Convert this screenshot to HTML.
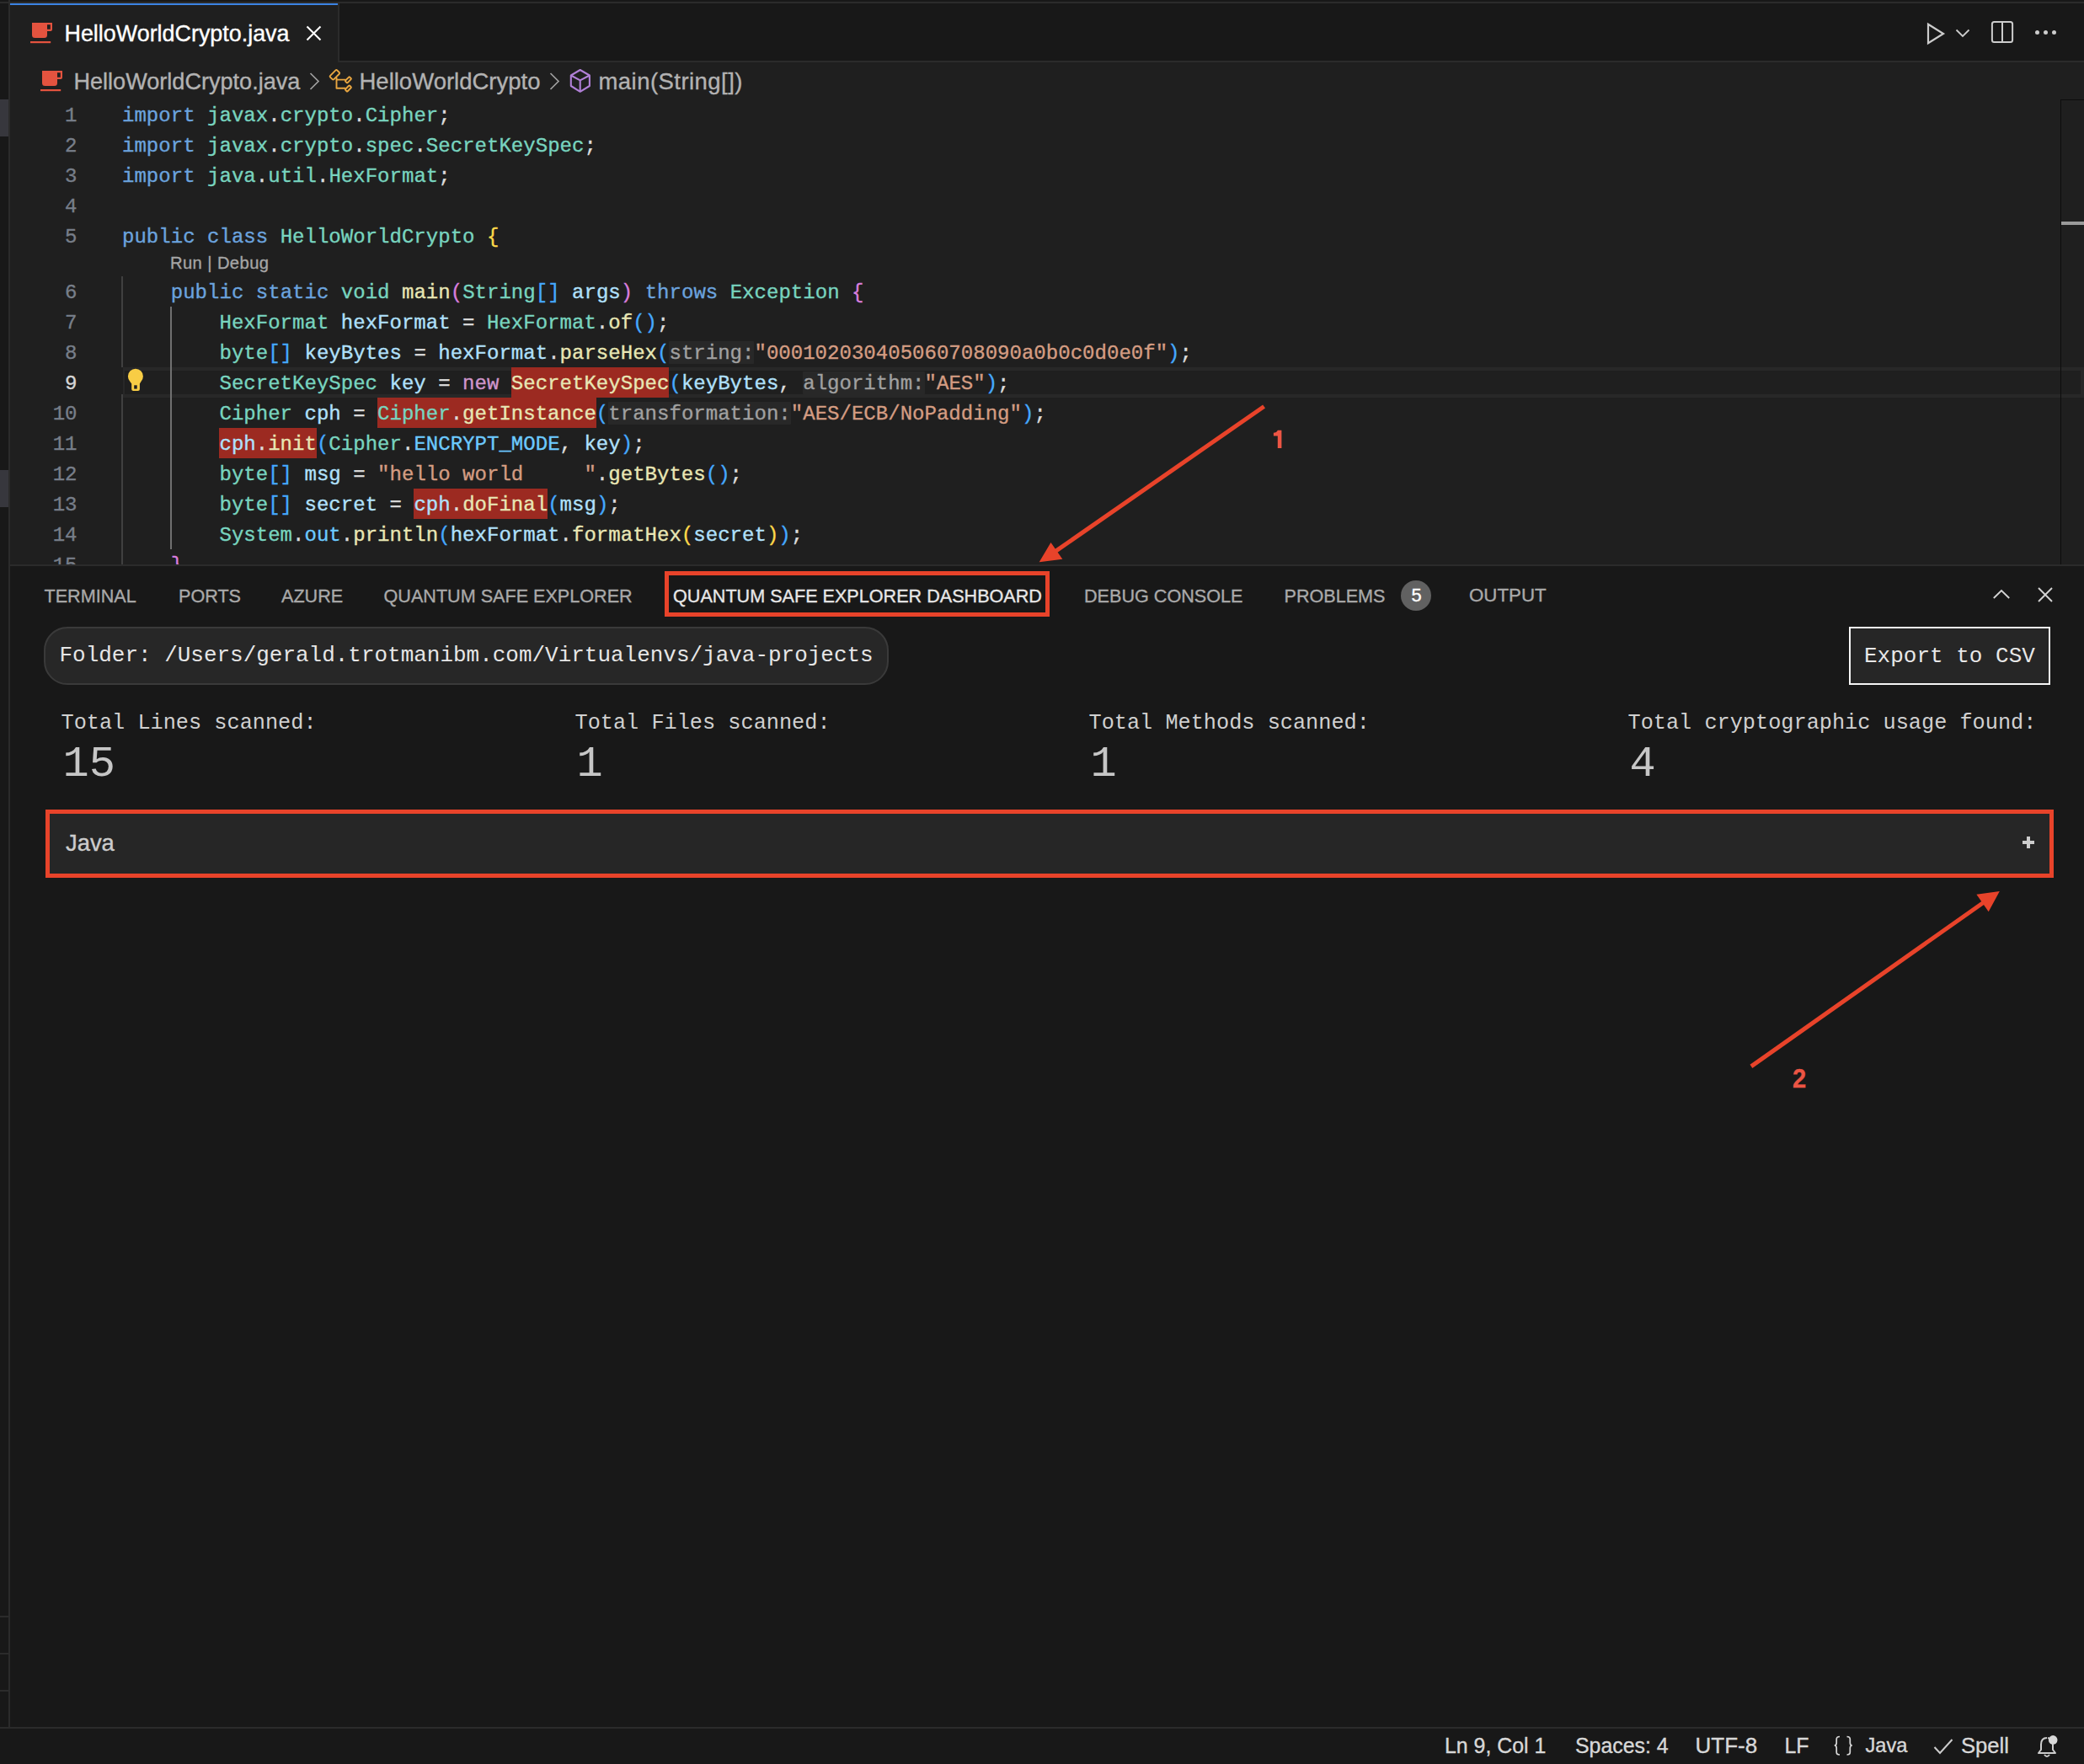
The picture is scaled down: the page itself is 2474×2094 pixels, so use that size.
<!DOCTYPE html>
<html><head><meta charset="utf-8"><title>VS Code</title>
<style>html,body{margin:0;padding:0;width:2474px;height:2094px;overflow:hidden;background:#1f1f1f} div{-webkit-text-stroke:0.35px currentColor} span{-webkit-text-stroke:0.35px currentColor}</style></head>
<body><div style="position:relative;width:2474px;height:2094px;overflow:hidden">
<div style="position:absolute;left:0px;top:0px;width:2474px;height:2094px;background:#1f1f1f;"></div>
<div style="position:absolute;left:0px;top:0px;width:10px;height:2050px;background:#181818;"></div>
<div style="position:absolute;left:10px;top:0px;width:2px;height:2050px;background:#2b2b2b;"></div>
<div style="position:absolute;left:0px;top:118px;width:10px;height:44px;background:#37373d;"></div>
<div style="position:absolute;left:0px;top:558px;width:10px;height:44px;background:#37373d;"></div>
<div style="position:absolute;left:0px;top:1918px;width:10px;height:2px;background:#2b2b2b;"></div>
<div style="position:absolute;left:0px;top:1962px;width:10px;height:2px;background:#2b2b2b;"></div>
<div style="position:absolute;left:0px;top:2006px;width:10px;height:2px;background:#2b2b2b;"></div>
<div style="position:absolute;left:12px;top:0px;width:2462px;height:72px;background:#181818;"></div>
<div style="position:absolute;left:0px;top:2px;width:2474px;height:2px;background:#2b2b2b;"></div>
<div style="position:absolute;left:12px;top:72px;width:2462px;height:2px;background:#2b2b2b;"></div>
<div style="position:absolute;left:12px;top:4px;width:389px;height:70px;background:#1f1f1f;"></div>
<div style="position:absolute;left:12px;top:4px;width:389px;height:2px;background:#3b83e3;"></div>
<div style="position:absolute;left:401px;top:4px;width:2px;height:70px;background:#2b2b2b;"></div>
<svg style="position:absolute;left:36px;top:27px" width="26.0" height="25.0" viewBox="0 0 26 25">
<path d="M2 0 H26 V8 Q26 10 24 10 H20 V14.5 Q20 18 16.5 18 H5.5 Q2 18 2 14.5 Z M20 2.2 V7.8 H23.8 V2.2 Z" fill="#e4533f" fill-rule="evenodd"/>
<rect x="0" y="22" width="24.2" height="2.2" fill="#e4533f"/></svg>
<div style="position:absolute;left:76.5px;top:27.42px;font:normal 26.9px/26.9px 'Liberation Sans', sans-serif;color:#ffffff;white-space:pre;">HelloWorldCrypto.java</div>
<svg style="position:absolute;left:363px;top:29.5px" width="19" height="19" viewBox="0 0 19 19"><path d="M1.5 1.5 L17.5 17.5 M17.5 1.5 L1.5 17.5" stroke="#ffffff" stroke-width="2.1"/></svg>
<svg style="position:absolute;left:2286px;top:25px" width="26" height="30" viewBox="0 0 26 30"><path d="M3 3.8 L21 15 L3 26.2 Z" fill="none" stroke="#cccccc" stroke-width="2.2" stroke-linejoin="miter"/></svg>
<svg style="position:absolute;left:2321px;top:34px" width="18" height="11" viewBox="0 0 18 11"><path d="M1.5 1.5 L9 9 L16.5 1.5" fill="none" stroke="#cccccc" stroke-width="1.8"/></svg>
<svg style="position:absolute;left:2363px;top:24px" width="28" height="28" viewBox="0 0 28 28"><rect x="1.9" y="1.9" width="24.2" height="24.2" rx="2.5" fill="none" stroke="#cccccc" stroke-width="2"/><path d="M14 2 V26" stroke="#cccccc" stroke-width="2"/></svg>
<div style="position:absolute;left:2415.5px;top:36px;width:5px;height:5px;border-radius:50%;background:#cccccc"></div>
<div style="position:absolute;left:2425.5px;top:36px;width:5px;height:5px;border-radius:50%;background:#cccccc"></div>
<div style="position:absolute;left:2435.5px;top:36px;width:5px;height:5px;border-radius:50%;background:#cccccc"></div>
<svg style="position:absolute;left:48px;top:84px" width="26.0" height="25.0" viewBox="0 0 26 25">
<path d="M2 0 H26 V8 Q26 10 24 10 H20 V14.5 Q20 18 16.5 18 H5.5 Q2 18 2 14.5 Z M20 2.2 V7.8 H23.8 V2.2 Z" fill="#e4533f" fill-rule="evenodd"/>
<rect x="0" y="22" width="24.2" height="2.2" fill="#e4533f"/></svg>
<div style="position:absolute;left:87.4px;top:83.45px;font:normal 27.1px/27.1px 'Liberation Sans', sans-serif;color:#b2b2b2;white-space:pre;">HelloWorldCrypto.java</div>
<svg style="position:absolute;left:367px;top:85.5px" width="13" height="21" viewBox="0 0 13 21"><path d="M1.5 1 L11 10.5 L1.5 20" fill="none" stroke="#a0a0a0" stroke-width="1.7"/></svg>
<svg style="position:absolute;left:385px;top:76px" width="40" height="40" viewBox="0 0 40 40">
<g fill="none" stroke="#e9a640" stroke-width="1.9" stroke-linejoin="round">
<rect x="-5.75" y="-3.05" width="11.5" height="6.1" rx="1.2" transform="translate(12.4,12.8) rotate(-45)"/>
<path d="M14.5 16 V28.8 H25 M14.5 18.6 H25"/>
<rect x="-3.6" y="-1.8" width="7.2" height="3.6" rx="0.8" transform="translate(28.4,18.8) rotate(-45)"/>
<rect x="-3.6" y="-1.8" width="7.2" height="3.6" rx="0.8" transform="translate(28.4,29) rotate(-45)"/>
</g></svg>
<div style="position:absolute;left:426.5px;top:83.12px;font:normal 27.5px/27.5px 'Liberation Sans', sans-serif;color:#b2b2b2;white-space:pre;">HelloWorldCrypto</div>
<svg style="position:absolute;left:651.5px;top:85.5px" width="13" height="21" viewBox="0 0 13 21"><path d="M1.5 1 L11 10.5 L1.5 20" fill="none" stroke="#a0a0a0" stroke-width="1.7"/></svg>
<svg style="position:absolute;left:670px;top:76px" width="40" height="40" viewBox="0 0 40 40">
<g fill="none" stroke="#b180d7" stroke-width="2.1" stroke-linejoin="round">
<path d="M18.7 7 L29.9 13.5 V26 L18.7 32.8 L7.8 26 V13.5 Z"/>
<path d="M7.8 13.5 L18.7 19.4 L29.9 13.5 M18.7 19.4 V32.8"/>
</g></svg>
<div style="position:absolute;left:710.5px;top:83.12px;font:normal 27.5px/27.5px 'Liberation Sans', sans-serif;color:#b2b2b2;white-space:pre;letter-spacing:0.45px;">main(String[])</div>
<div style="position:absolute;left:2446px;top:118px;width:1px;height:552px;background:#0d0d0d;"></div>
<div style="position:absolute;left:2446px;top:118px;width:28px;height:1px;background:#0d0d0d;"></div>
<div style="position:absolute;left:2447px;top:263px;width:27px;height:4px;background:#9a9a9a;"></div>
<div style="position:absolute;left:144px;top:328px;width:2px;height:342px;background:#404040;"></div>
<div style="position:absolute;left:146px;top:436px;width:2328px;height:4px;background:#282828;"></div>
<div style="position:absolute;left:146px;top:468px;width:2328px;height:4px;background:#282828;"></div>
<div style="position:absolute;left:146px;top:436px;width:2px;height:36px;background:#282828;"></div>
<div style="position:absolute;left:2470px;top:436px;width:4px;height:36px;background:#282828;"></div>
<div style="position:absolute;left:2446px;top:436px;width:1px;height:36px;background:#0d0d0d;"></div>
<div style="position:absolute;left:144px;top:436px;width:2px;height:32px;background:#1f1f1f;"></div>
<div style="position:absolute;left:202px;top:364px;width:2px;height:288px;background:#707070;"></div>
<div style="position:absolute;left:606.8240000000001px;top:436px;width:187.616px;height:36px;background:#9c2a21;"></div>
<div style="position:absolute;left:448.072px;top:472px;width:259.776px;height:36px;background:#9c2a21;"></div>
<div style="position:absolute;left:260.456px;top:508px;width:115.456px;height:36px;background:#9c2a21;"></div>
<div style="position:absolute;left:491.368px;top:580px;width:158.752px;height:36px;background:#9c2a21;"></div>
<div style="position:absolute;left:794.44px;top:404.5px;width:101.024px;height:27.5px;background:#282828;border-radius:1px;"></div>
<div style="position:absolute;left:953.192px;top:440.5px;width:144.32px;height:27.5px;background:#282828;border-radius:1px;"></div>
<div style="position:absolute;left:722.28px;top:476.5px;width:216.48000000000002px;height:27.5px;background:#282828;border-radius:1px;"></div>
<div style="position:absolute;left:12px;top:118px;width:2434px;height:552px;overflow:hidden">
<div style="position:absolute;left:65.07px;top:7.61px;font:24.05px/24.05px 'Liberation Mono', monospace;color:#777e89;white-space:pre">1</div>
<div style="position:absolute;left:133px;top:7.61px;font:24.05px/24.05px 'Liberation Mono', monospace;white-space:pre"><span style="color:#6ba3de">import</span><span style="color:#dcdcdc"> </span><span style="color:#78d4bf">javax</span><span style="color:#dcdcdc">.</span><span style="color:#78d4bf">crypto</span><span style="color:#dcdcdc">.</span><span style="color:#78d4bf">Cipher</span><span style="color:#dcdcdc">;</span></div>
<div style="position:absolute;left:65.07px;top:43.61px;font:24.05px/24.05px 'Liberation Mono', monospace;color:#777e89;white-space:pre">2</div>
<div style="position:absolute;left:133px;top:43.61px;font:24.05px/24.05px 'Liberation Mono', monospace;white-space:pre"><span style="color:#6ba3de">import</span><span style="color:#dcdcdc"> </span><span style="color:#78d4bf">javax</span><span style="color:#dcdcdc">.</span><span style="color:#78d4bf">crypto</span><span style="color:#dcdcdc">.</span><span style="color:#78d4bf">spec</span><span style="color:#dcdcdc">.</span><span style="color:#78d4bf">SecretKeySpec</span><span style="color:#dcdcdc">;</span></div>
<div style="position:absolute;left:65.07px;top:79.61px;font:24.05px/24.05px 'Liberation Mono', monospace;color:#777e89;white-space:pre">3</div>
<div style="position:absolute;left:133px;top:79.61px;font:24.05px/24.05px 'Liberation Mono', monospace;white-space:pre"><span style="color:#6ba3de">import</span><span style="color:#dcdcdc"> </span><span style="color:#78d4bf">java</span><span style="color:#dcdcdc">.</span><span style="color:#78d4bf">util</span><span style="color:#dcdcdc">.</span><span style="color:#78d4bf">HexFormat</span><span style="color:#dcdcdc">;</span></div>
<div style="position:absolute;left:65.07px;top:115.61px;font:24.05px/24.05px 'Liberation Mono', monospace;color:#777e89;white-space:pre">4</div>
<div style="position:absolute;left:133px;top:115.61px;font:24.05px/24.05px 'Liberation Mono', monospace;white-space:pre"></div>
<div style="position:absolute;left:65.07px;top:151.61px;font:24.05px/24.05px 'Liberation Mono', monospace;color:#777e89;white-space:pre">5</div>
<div style="position:absolute;left:133px;top:151.61px;font:24.05px/24.05px 'Liberation Mono', monospace;white-space:pre"><span style="color:#6ba3de">public</span><span style="color:#dcdcdc"> </span><span style="color:#6ba3de">class</span><span style="color:#dcdcdc"> </span><span style="color:#78d4bf">HelloWorldCrypto</span><span style="color:#dcdcdc"> </span><span style="color:#fdd84a">{</span></div>
<div style="position:absolute;left:65.07px;top:217.61px;font:24.05px/24.05px 'Liberation Mono', monospace;color:#777e89;white-space:pre">6</div>
<div style="position:absolute;left:133px;top:217.61px;font:24.05px/24.05px 'Liberation Mono', monospace;white-space:pre"><span style="color:#dcdcdc">    </span><span style="color:#6ba3de">public</span><span style="color:#dcdcdc"> </span><span style="color:#6ba3de">static</span><span style="color:#dcdcdc"> </span><span style="color:#78d4bf">void</span><span style="color:#dcdcdc"> </span><span style="color:#e8e6b4">main</span><span style="color:#d87ddd">(</span><span style="color:#78d4bf">String</span><span style="color:#45a9ff">[]</span><span style="color:#dcdcdc"> </span><span style="color:#b0e0fb">args</span><span style="color:#d87ddd">)</span><span style="color:#dcdcdc"> </span><span style="color:#6ba3de">throws</span><span style="color:#dcdcdc"> </span><span style="color:#78d4bf">Exception</span><span style="color:#dcdcdc"> </span><span style="color:#d87ddd">{</span></div>
<div style="position:absolute;left:65.07px;top:253.61px;font:24.05px/24.05px 'Liberation Mono', monospace;color:#777e89;white-space:pre">7</div>
<div style="position:absolute;left:133px;top:253.61px;font:24.05px/24.05px 'Liberation Mono', monospace;white-space:pre"><span style="color:#dcdcdc">        </span><span style="color:#78d4bf">HexFormat</span><span style="color:#dcdcdc"> </span><span style="color:#b0e0fb">hexFormat</span><span style="color:#dcdcdc"> = </span><span style="color:#78d4bf">HexFormat</span><span style="color:#dcdcdc">.</span><span style="color:#e8e6b4">of</span><span style="color:#45a9ff">()</span><span style="color:#dcdcdc">;</span></div>
<div style="position:absolute;left:65.07px;top:289.61px;font:24.05px/24.05px 'Liberation Mono', monospace;color:#777e89;white-space:pre">8</div>
<div style="position:absolute;left:133px;top:289.61px;font:24.05px/24.05px 'Liberation Mono', monospace;white-space:pre"><span style="color:#dcdcdc">        </span><span style="color:#78d4bf">byte</span><span style="color:#45a9ff">[]</span><span style="color:#dcdcdc"> </span><span style="color:#b0e0fb">keyBytes</span><span style="color:#dcdcdc"> = </span><span style="color:#b0e0fb">hexFormat</span><span style="color:#dcdcdc">.</span><span style="color:#e8e6b4">parseHex</span><span style="color:#45a9ff">(</span><span style="color:#a0a0a0">string:</span><span style="color:#d49c82">&quot;000102030405060708090a0b0c0d0e0f&quot;</span><span style="color:#45a9ff">)</span><span style="color:#dcdcdc">;</span></div>
<div style="position:absolute;left:65.07px;top:325.61px;font:24.05px/24.05px 'Liberation Mono', monospace;color:#d6d6d6;white-space:pre">9</div>
<div style="position:absolute;left:133px;top:325.61px;font:24.05px/24.05px 'Liberation Mono', monospace;white-space:pre"><span style="color:#dcdcdc">        </span><span style="color:#78d4bf">SecretKeySpec</span><span style="color:#dcdcdc"> </span><span style="color:#b0e0fb">key</span><span style="color:#dcdcdc"> = </span><span style="color:#d096cb">new</span><span style="color:#dcdcdc"> </span><span style="color:#e8e6b4">SecretKeySpec</span><span style="color:#45a9ff">(</span><span style="color:#b0e0fb">keyBytes</span><span style="color:#dcdcdc">, </span><span style="color:#a0a0a0">algorithm:</span><span style="color:#d49c82">&quot;AES&quot;</span><span style="color:#45a9ff">)</span><span style="color:#dcdcdc">;</span></div>
<div style="position:absolute;left:50.64px;top:361.61px;font:24.05px/24.05px 'Liberation Mono', monospace;color:#777e89;white-space:pre">10</div>
<div style="position:absolute;left:133px;top:361.61px;font:24.05px/24.05px 'Liberation Mono', monospace;white-space:pre"><span style="color:#dcdcdc">        </span><span style="color:#78d4bf">Cipher</span><span style="color:#dcdcdc"> </span><span style="color:#b0e0fb">cph</span><span style="color:#dcdcdc"> = </span><span style="color:#78d4bf">Cipher</span><span style="color:#dcdcdc">.</span><span style="color:#e8e6b4">getInstance</span><span style="color:#45a9ff">(</span><span style="color:#a0a0a0">transformation:</span><span style="color:#d49c82">&quot;AES/ECB/NoPadding&quot;</span><span style="color:#45a9ff">)</span><span style="color:#dcdcdc">;</span></div>
<div style="position:absolute;left:50.64px;top:397.61px;font:24.05px/24.05px 'Liberation Mono', monospace;color:#777e89;white-space:pre">11</div>
<div style="position:absolute;left:133px;top:397.61px;font:24.05px/24.05px 'Liberation Mono', monospace;white-space:pre"><span style="color:#dcdcdc">        </span><span style="color:#b0e0fb">cph</span><span style="color:#dcdcdc">.</span><span style="color:#e8e6b4">init</span><span style="color:#45a9ff">(</span><span style="color:#78d4bf">Cipher</span><span style="color:#dcdcdc">.</span><span style="color:#6ccaff">ENCRYPT_MODE</span><span style="color:#dcdcdc">, </span><span style="color:#b0e0fb">key</span><span style="color:#45a9ff">)</span><span style="color:#dcdcdc">;</span></div>
<div style="position:absolute;left:50.64px;top:433.61px;font:24.05px/24.05px 'Liberation Mono', monospace;color:#777e89;white-space:pre">12</div>
<div style="position:absolute;left:133px;top:433.61px;font:24.05px/24.05px 'Liberation Mono', monospace;white-space:pre"><span style="color:#dcdcdc">        </span><span style="color:#78d4bf">byte</span><span style="color:#45a9ff">[]</span><span style="color:#dcdcdc"> </span><span style="color:#b0e0fb">msg</span><span style="color:#dcdcdc"> = </span><span style="color:#d49c82">&quot;hello world     &quot;</span><span style="color:#dcdcdc">.</span><span style="color:#e8e6b4">getBytes</span><span style="color:#45a9ff">()</span><span style="color:#dcdcdc">;</span></div>
<div style="position:absolute;left:50.64px;top:469.61px;font:24.05px/24.05px 'Liberation Mono', monospace;color:#777e89;white-space:pre">13</div>
<div style="position:absolute;left:133px;top:469.61px;font:24.05px/24.05px 'Liberation Mono', monospace;white-space:pre"><span style="color:#dcdcdc">        </span><span style="color:#78d4bf">byte</span><span style="color:#45a9ff">[]</span><span style="color:#dcdcdc"> </span><span style="color:#b0e0fb">secret</span><span style="color:#dcdcdc"> = </span><span style="color:#b0e0fb">cph</span><span style="color:#dcdcdc">.</span><span style="color:#e8e6b4">doFinal</span><span style="color:#45a9ff">(</span><span style="color:#b0e0fb">msg</span><span style="color:#45a9ff">)</span><span style="color:#dcdcdc">;</span></div>
<div style="position:absolute;left:50.64px;top:505.61px;font:24.05px/24.05px 'Liberation Mono', monospace;color:#777e89;white-space:pre">14</div>
<div style="position:absolute;left:133px;top:505.61px;font:24.05px/24.05px 'Liberation Mono', monospace;white-space:pre"><span style="color:#dcdcdc">        </span><span style="color:#78d4bf">System</span><span style="color:#dcdcdc">.</span><span style="color:#6ccaff">out</span><span style="color:#dcdcdc">.</span><span style="color:#e8e6b4">println</span><span style="color:#45a9ff">(</span><span style="color:#b0e0fb">hexFormat</span><span style="color:#dcdcdc">.</span><span style="color:#e8e6b4">formatHex</span><span style="color:#fdd84a">(</span><span style="color:#b0e0fb">secret</span><span style="color:#fdd84a">)</span><span style="color:#45a9ff">)</span><span style="color:#dcdcdc">;</span></div>
<div style="position:absolute;left:50.64px;top:541.61px;font:24.05px/24.05px 'Liberation Mono', monospace;color:#777e89;white-space:pre">15</div>
<div style="position:absolute;left:133px;top:541.61px;font:24.05px/24.05px 'Liberation Mono', monospace;white-space:pre"><span style="color:#dcdcdc">    </span><span style="color:#d87ddd">}</span></div>
</div>
<div style="position:absolute;left:202px;top:301.80px;font:normal 20.2px/20.2px 'Liberation Sans', sans-serif;color:#a5a5a5;white-space:pre;letter-spacing:0.4px;">Run | Debug</div>
<svg style="position:absolute;left:151px;top:437px" width="20" height="28" viewBox="0 0 20 28">
<path d="M3.4 16 A9 9 0 1 1 16.4 16 L14.9 18.6 V25 Q14.9 27 12.9 27 H7.2 Q5.2 27 5.2 25 V18.6 Z" fill="#f8cd45"/>
<rect x="8.2" y="20.3" width="3.5" height="4.3" fill="#1f1f1f"/>
</svg>
<div style="position:absolute;left:12px;top:670px;width:2462px;height:1380px;background:#181818;"></div>
<div style="position:absolute;left:12px;top:670px;width:2462px;height:2px;background:#2b2b2b;"></div>
<div style="position:absolute;left:52.5px;top:696.91px;font:normal 21.6px/21.6px 'Liberation Sans', sans-serif;color:#a9a9a9;white-space:pre;">TERMINAL</div>
<div style="position:absolute;left:212px;top:696.91px;font:normal 21.6px/21.6px 'Liberation Sans', sans-serif;color:#a9a9a9;white-space:pre;">PORTS</div>
<div style="position:absolute;left:334px;top:696.91px;font:normal 21.6px/21.6px 'Liberation Sans', sans-serif;color:#a9a9a9;white-space:pre;">AZURE</div>
<div style="position:absolute;left:455.5px;top:696.91px;font:normal 21.6px/21.6px 'Liberation Sans', sans-serif;color:#a9a9a9;white-space:pre;">QUANTUM SAFE EXPLORER</div>
<div style="position:absolute;left:799px;top:696.91px;font:normal 21.6px/21.6px 'Liberation Sans', sans-serif;color:#e7e7e7;white-space:pre;">QUANTUM SAFE EXPLORER DASHBOARD</div>
<div style="position:absolute;left:1287px;top:696.91px;font:normal 21.6px/21.6px 'Liberation Sans', sans-serif;color:#a9a9a9;white-space:pre;">DEBUG CONSOLE</div>
<div style="position:absolute;left:1524.5px;top:696.91px;font:normal 21.6px/21.6px 'Liberation Sans', sans-serif;color:#a9a9a9;white-space:pre;">PROBLEMS</div>
<div style="position:absolute;left:1663px;top:688.5px;width:36px;height:36px;border-radius:50%;background:#616161"></div>
<div style="position:absolute;left:1675.5px;top:696.46px;font:normal 21.9px/21.9px 'Liberation Sans', sans-serif;color:#ffffff;white-space:pre;">5</div>
<div style="position:absolute;left:1744px;top:696.32px;font:normal 22.3px/22.3px 'Liberation Sans', sans-serif;color:#a9a9a9;white-space:pre;">OUTPUT</div>
<svg style="position:absolute;left:2364px;top:697px" width="24" height="16" viewBox="0 0 24 16"><path d="M2.8 13 L12 4 L21.2 13" fill="none" stroke="#d4d4d4" stroke-width="1.9"/></svg>
<svg style="position:absolute;left:2418px;top:696px" width="20" height="20" viewBox="0 0 20 20"><path d="M2 2 L18 18 M18 2 L2 18" stroke="#d4d4d4" stroke-width="1.9"/></svg>
<div style="position:absolute;left:52px;top:744px;width:1003px;height:69px;box-sizing:border-box;border:2px solid #3a3a3a;border-radius:28px;background:#272727"></div>
<div style="position:absolute;left:70.5px;top:766.10px;font:normal 25.97px/25.97px 'Liberation Mono', monospace;color:#e6e6e6;white-space:pre;-webkit-text-stroke:0;">Folder: /Users/gerald.trotmanibm.com/Virtualenvs/java-projects</div>
<div style="position:absolute;left:2195px;top:744px;width:239px;height:69px;box-sizing:border-box;border:2.3px solid #f5f5f5;background:#262626"></div>
<div style="position:absolute;left:2213px;top:765.58px;font:normal 26px/26px 'Liberation Mono', monospace;color:#e8e8e8;white-space:pre;-webkit-text-stroke:0;">Export to CSV</div>
<div style="position:absolute;left:72.5px;top:846.16px;font:normal 25.25px/25.25px 'Liberation Mono', monospace;color:#d0d0d0;white-space:pre;-webkit-text-stroke:0;">Total Lines scanned:</div>
<div style="position:absolute;left:74.5px;top:882.16px;font:normal 52px/52px 'Liberation Mono', monospace;color:#c6c6c6;white-space:pre;-webkit-text-stroke:0;">15</div>
<div style="position:absolute;left:682.5px;top:846.16px;font:normal 25.25px/25.25px 'Liberation Mono', monospace;color:#d0d0d0;white-space:pre;-webkit-text-stroke:0;">Total Files scanned:</div>
<div style="position:absolute;left:684.5px;top:882.16px;font:normal 52px/52px 'Liberation Mono', monospace;color:#c6c6c6;white-space:pre;-webkit-text-stroke:0;">1</div>
<div style="position:absolute;left:1292.5px;top:846.16px;font:normal 25.25px/25.25px 'Liberation Mono', monospace;color:#d0d0d0;white-space:pre;-webkit-text-stroke:0;">Total Methods scanned:</div>
<div style="position:absolute;left:1294.5px;top:882.16px;font:normal 52px/52px 'Liberation Mono', monospace;color:#c6c6c6;white-space:pre;-webkit-text-stroke:0;">1</div>
<div style="position:absolute;left:1932.5px;top:846.16px;font:normal 25.25px/25.25px 'Liberation Mono', monospace;color:#d0d0d0;white-space:pre;-webkit-text-stroke:0;">Total cryptographic usage found:</div>
<div style="position:absolute;left:1934.5px;top:882.16px;font:normal 52px/52px 'Liberation Mono', monospace;color:#c6c6c6;white-space:pre;-webkit-text-stroke:0;">4</div>
<div style="position:absolute;left:54px;top:961px;width:2384px;height:81px;background:#e8432a;"></div>
<div style="position:absolute;left:59px;top:966px;width:2374px;height:71px;background:#262626;"></div>
<div style="position:absolute;left:78px;top:987.30px;font:normal 27.4px/27.4px 'Liberation Sans', sans-serif;color:#cccccc;white-space:pre;">Java</div>
<div style="position:absolute;left:2400.5px;top:997.5px;width:14.5px;height:4.5px;background:#cccccc;"></div>
<div style="position:absolute;left:2405.5px;top:992.5px;width:4.5px;height:14.5px;background:#cccccc;"></div>
<svg style="position:absolute;left:0;top:0" width="2474" height="2094" viewBox="0 0 2474 2094">
<line x1="1500.6" y1="482.5" x2="1244.0500000000002" y2="660.5999999999999" stroke="#e8432a" stroke-width="5"/>
<path d="M1233.7 667.3 L1247.5 644 L1261.3 663.8 Z" fill="#e8432a"/></svg>
<svg style="position:absolute;left:0;top:0" width="2474" height="2094" viewBox="0 0 2474 2094">
<line x1="2078.9" y1="1265.9" x2="2363.675" y2="1065.025" stroke="#e8432a" stroke-width="5"/>
<path d="M2373.8 1058 L2346.4 1061.8 L2360.7 1082.3 Z" fill="#e8432a"/></svg>
<svg style="position:absolute;left:1500px;top:500px" width="40" height="40" viewBox="0 0 40 40"><path d="M16.8 10.8 H21.4 V32 H16.8 V17.6 H11.9 V13.8 Q15.6 13.8 16.8 10.8 Z" fill="#ec5544"/></svg>
<div style="position:absolute;left:2128.3px;top:1264.50px;font:bold 31.3px/31.3px 'Liberation Sans', sans-serif;color:#ec5544;white-space:pre;transform:scaleX(0.93);transform-origin:0 0;">2</div>
<div style="position:absolute;left:789px;top:678px;width:457px;height:54px;box-sizing:border-box;border:5px solid #e8432a"></div>
<div style="position:absolute;left:0px;top:2050px;width:2474px;height:44px;background:#181818;"></div>
<div style="position:absolute;left:0px;top:2050px;width:2474px;height:2px;background:#2b2b2b;"></div>
<div style="position:absolute;left:1715px;top:2060.22px;font:normal 24.9px/24.9px 'Liberation Sans', sans-serif;color:#d8d8d8;white-space:pre;">Ln 9, Col 1</div>
<div style="position:absolute;left:1870px;top:2060.22px;font:normal 24.9px/24.9px 'Liberation Sans', sans-serif;color:#d8d8d8;white-space:pre;">Spaces: 4</div>
<div style="position:absolute;left:2012.5px;top:2059.29px;font:normal 26px/26px 'Liberation Sans', sans-serif;color:#d8d8d8;white-space:pre;">UTF-8</div>
<div style="position:absolute;left:2118.5px;top:2060.22px;font:normal 24.9px/24.9px 'Liberation Sans', sans-serif;color:#d8d8d8;white-space:pre;">LF</div>
<svg style="position:absolute;left:2170px;top:2055px" width="36" height="34" viewBox="0 0 36 34"><g fill="none" stroke="#d8d8d8" stroke-width="1.7"><path d="M14 6.5 Q10.2 6.5 10.2 9.5 V14 Q10.2 16.8 7.8 17 Q10.2 17.2 10.2 20 V25 Q10.2 28 14 28"/><path d="M22.5 6.5 Q26.3 6.5 26.3 9.5 V14 Q26.3 16.8 28.7 17 Q26.3 17.2 26.3 20 V25 Q26.3 28 22.5 28"/></g></svg>
<div style="position:absolute;left:2214.5px;top:2061.32px;font:normal 23.6px/23.6px 'Liberation Sans', sans-serif;color:#d8d8d8;white-space:pre;">Java</div>
<svg style="position:absolute;left:2295px;top:2063px" width="24" height="20" viewBox="0 0 24 20"><path d="M1.5 11 L8 18 L22.5 2" fill="none" stroke="#cccccc" stroke-width="2"/></svg>
<div style="position:absolute;left:2328px;top:2059.62px;font:normal 25.6px/25.6px 'Liberation Sans', sans-serif;color:#d8d8d8;white-space:pre;">Spell</div>
<svg style="position:absolute;left:2417px;top:2059px" width="34" height="28" viewBox="0 0 34 28">
<path d="M13 4 Q6 4 6 12 V18 L3 22 H23 L20 18 V12 Q20 5 14 4" fill="none" stroke="#cccccc" stroke-width="2" stroke-linejoin="round"/>
<path d="M10 24 Q13 28 16 24" fill="none" stroke="#cccccc" stroke-width="2"/>
<circle cx="20.2" cy="6.4" r="5.3" fill="#d8d8d8"/></svg>
</div></body></html>
